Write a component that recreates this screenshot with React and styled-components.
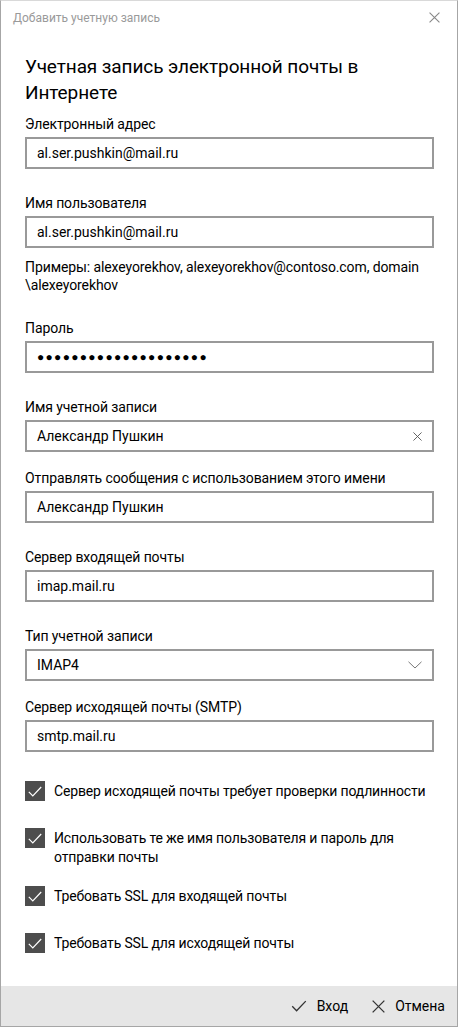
import React from 'react';
import styled, { createGlobalStyle } from 'styled-components';

const Global = createGlobalStyle`
  html, body {
    margin: 0;
    padding: 0;
    background: #fff;
  }
  body {
    font-family: Roboto, "Noto Sans", sans-serif;
    color: #000;
  }
`;

const Window = styled.div`
  box-sizing: border-box;
  width: 458px;
  height: 1027px;
  border: 1px solid #a6a6a6;
  border-top-color: #d9d9d9;
  display: flex;
  flex-direction: column;
  background: #fff;
`;

const TitleBar = styled.div`
  height: 33px;
  display: flex;
  align-items: center;
  justify-content: space-between;
  padding: 0 17px 0 12px;
  font-size: 12px;
  color: #9a9a9a;
`;

const Body = styled.div`
  flex: 1;
  padding: 20px 23px 0 24px;
  display: flex;
  flex-direction: column;
`;

const Heading = styled.h1`
  margin: 0 0 8px;
  font-size: 19px;
  font-weight: 400;
  line-height: 26px;
  letter-spacing: -0.1px;
`;

const Field = styled.div`
  display: flex;
  flex-direction: column;
  margin-top: ${p => p.$top || 0}px;
`;

const Label = styled.div`
  font-size: 14px;
  line-height: 20px;
  margin-bottom: 3px;
  letter-spacing: -0.1px;
`;

const Box = styled.div`
  box-sizing: border-box;
  height: 32px;
  border: 2px solid #999;
  display: flex;
  align-items: center;
  justify-content: space-between;
  padding: 0 10px;
  font-size: 14px;
`;

const Dots = styled.span`
  font-size: 12px;
  letter-spacing: 1.3px;
`;

const Hint = styled.div`
  margin-top: 10px;
  font-size: 14px;
  line-height: 18px;
  letter-spacing: -0.1px;
`;

const Checks = styled.div`
  margin-top: 29px;
  display: flex;
  flex-direction: column;
  gap: 15px;
`;

const CheckRow = styled.div`
  display: flex;
  align-items: flex-start;
  min-height: 32px;
  gap: 9px;
`;

const CheckBox = styled.span`
  flex: none;
  width: 20px;
  height: 20px;
  background: #4d4d4d;
  display: flex;
  align-items: center;
  justify-content: center;
`;

const CheckText = styled.span`
  font-size: 14px;
  line-height: 19px;
  padding-bottom: 4px;
  margin-top: 1px;
  letter-spacing: -0.15px;
`;

const Footer = styled.div`
  height: 40px;
  background: #e6e6e6;
  display: flex;
  align-items: center;
  justify-content: flex-end;
  padding-right: 12px;
  gap: 24px;
`;

const FootButton = styled.div`
  display: flex;
  align-items: center;
  gap: 10px;
  font-size: 14px;
`;

const XIcon = ({ size = 10, color = '#555' }) => (
  <svg width={size} height={size} viewBox="0 0 10 10">
    <path d="M0.5 0.5 L9.5 9.5 M9.5 0.5 L0.5 9.5" stroke={color} strokeWidth="1" fill="none" />
  </svg>
);

const Tick = ({ w = 14, h = 11, color = '#fff' }) => (
  <svg width={w} height={h} viewBox="0 0 14 11">
    <path d="M0.8 5.8 L4.8 9.8 L13.2 1" stroke={color} strokeWidth="1.2" fill="none" />
  </svg>
);

const Chevron = () => (
  <svg width="14" height="8" viewBox="0 0 14 8">
    <path d="M0.5 0.8 L7 7 L13.5 0.8" stroke="#777" strokeWidth="1" fill="none" />
  </svg>
);

const checks = [
  'Сервер исходящей почты требует проверки подлинности',
  'Использовать те же имя пользователя и пароль для отправки почты',
  'Требовать SSL для входящей почты',
  'Требовать SSL для исходящей почты',
];

export default function App() {
  return (
    <>
      <Global />
      <Window>
        <TitleBar>
          <span>Добавить учетную запись</span>
          <XIcon size={11} color="#888" />
        </TitleBar>
        <Body>
          <Heading>Учетная запись электронной почты в Интернете</Heading>
          <Field>
            <Label>Электронный адрес</Label>
            <Box>al.ser.pushkin@mail.ru</Box>
          </Field>
          <Field $top={24}>
            <Label>Имя пользователя</Label>
            <Box>al.ser.pushkin@mail.ru</Box>
          </Field>
          <Hint>
            Примеры: alexeyorekhov, alexeyorekhov@contoso.com, domain
            <br />
            \alexeyorekhov
          </Hint>
          <Field $top={24}>
            <Label>Пароль</Label>
            <Box><Dots>{'●'.repeat(20)}</Dots></Box>
          </Field>
          <Field $top={24}>
            <Label>Имя учетной записи</Label>
            <Box>
              <span>Александр Пушкин</span>
              <XIcon size={9} color="#555" />
            </Box>
          </Field>
          <Field $top={16}>
            <Label>Отправлять сообщения с использованием этого имени</Label>
            <Box>Александр Пушкин</Box>
          </Field>
          <Field $top={24}>
            <Label>Сервер входящей почты</Label>
            <Box>imap.mail.ru</Box>
          </Field>
          <Field $top={24}>
            <Label>Тип учетной записи</Label>
            <Box>
              <span>IMAP4</span>
              <Chevron />
            </Box>
          </Field>
          <Field $top={16}>
            <Label>Сервер исходящей почты (SMTP)</Label>
            <Box>smtp.mail.ru</Box>
          </Field>
          <Checks>
            {checks.map(t => (
              <CheckRow key={t}>
                <CheckBox><Tick /></CheckBox>
                <CheckText>{t}</CheckText>
              </CheckRow>
            ))}
          </Checks>
        </Body>
        <Footer>
          <FootButton>
            <Tick w={16} h={12} color="#333" />
            <span>Вход</span>
          </FootButton>
          <FootButton>
            <XIcon size={13} color="#333" />
            <span>Отмена</span>
          </FootButton>
        </Footer>
      </Window>
    </>
  );
}
